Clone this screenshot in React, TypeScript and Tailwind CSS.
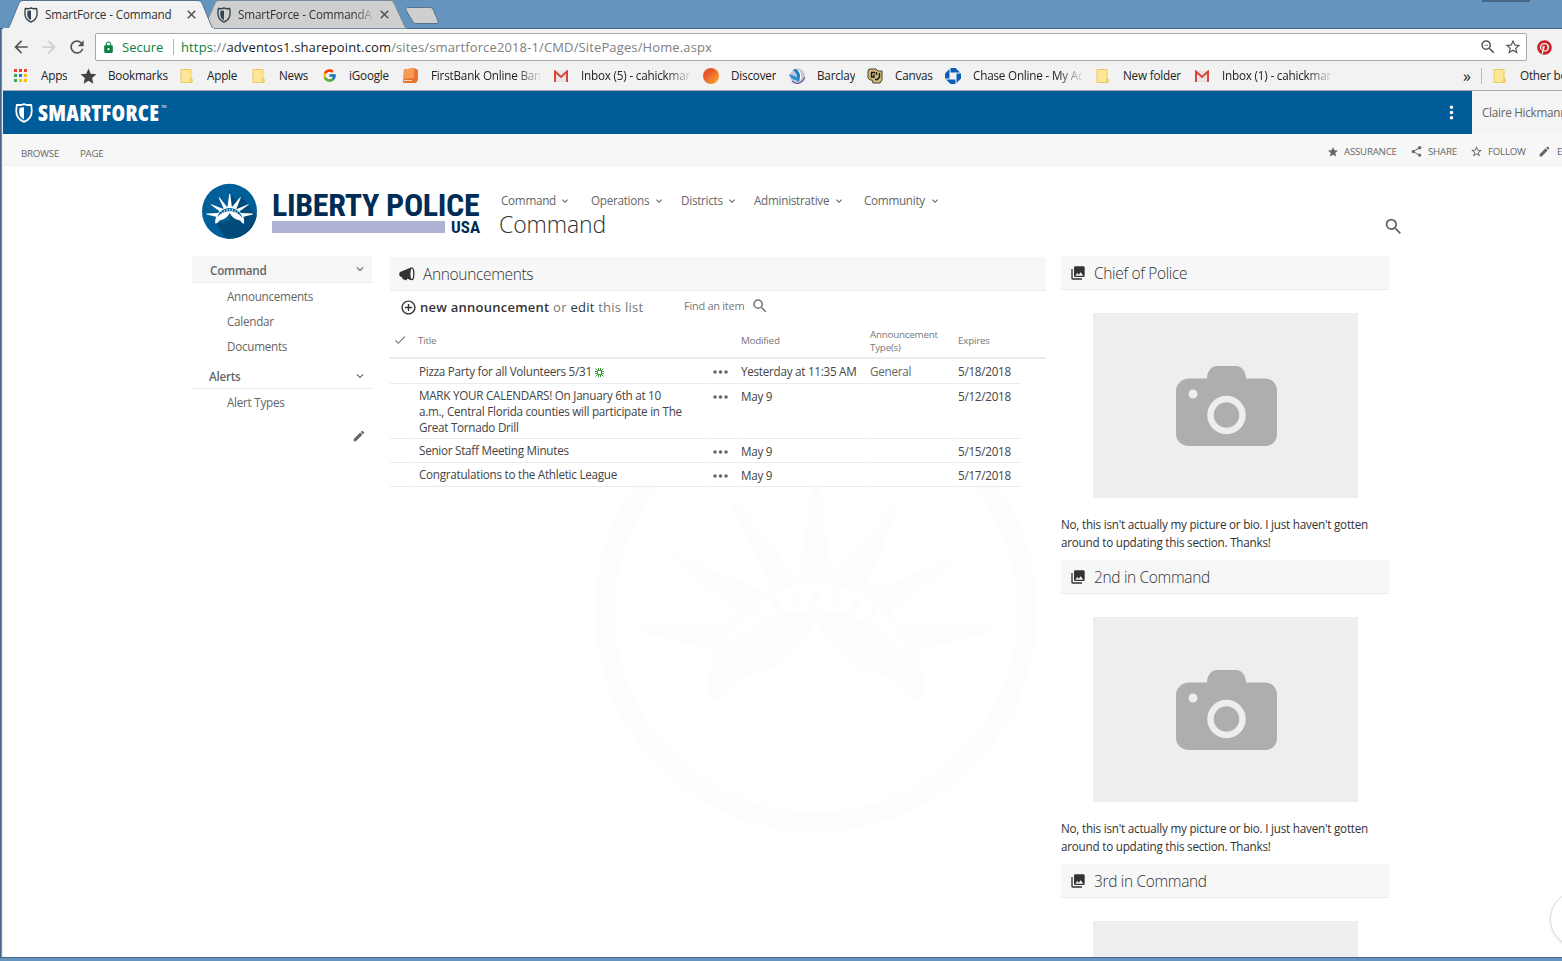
import type { ReactNode } from "react";
import {
  MdAddCircleOutline,
  MdArrowBack,
  MdArrowForward,
  MdCheck,
  MdEdit,
  MdKeyboardArrowDown,
  MdLock,
  MdMoreVert,
  MdPhotoLibrary,
  MdRefresh,
  MdSearch,
  MdShare,
  MdStar,
  MdStarBorder,
  MdZoomOut,
} from "react-icons/md";
import { FaPinterest } from "react-icons/fa";
import { FcGoogle } from "react-icons/fc";

function Shield({ className }: { className?: string }) {
  return (
    <svg viewBox="0 0 16 18" className={className} fill="none">
      <path d="M8 1 10.5 1.8 14.5 1.6 15 7C15 12 12 15.500 8 17 4 15.500 1 12 1 7L1.500 1.600 5.500 1.800Z" stroke="currentColor" strokeWidth="1.6" strokeLinejoin="round" />
      <path d="M8 3.800 4 4.200 3.600 8C3.800 11.500 5.500 13.600 8 14.800Z" fill="currentColor" />
    </svg>
  );
}

function Crown({ fill, band }: { fill: string; band: string }) {
  return (
    <g>
      <path
        fill={fill}
        d="M383 690C381 640 386 595 403 543L190 488Q172 478 190 468L450 458 478 420 282 272Q276 256 294 260L555 362 572 355 458 112Q460 96 476 106L645 316 658 318 695 35Q707 18 719 35L755 316 768 313 940 106Q956 98 956 114L855 362 870 365 1120 260Q1138 258 1131 272L930 420 955 458 1222 468Q1238 478 1222 488L1015 540C1030 600 1032 640 1028 695 985 690 960 650 940 625 830 605 750 540 707 455 664 540 590 605 475 625 455 665 430 695 383 690Z"
      />
      <path fill={band} d="M425 565C460 420 570 343 707 343 845 343 950 420 1000 582 920 475 830 420 707 420 590 420 480 475 425 565Z" />
      <g fill={fill}>
        <rect x="696" y="358" width="22" height="50" rx="9" />
        <rect x="635" y="364" width="22" height="48" rx="9" transform="rotate(-10 646 388)" />
        <rect x="753" y="364" width="22" height="48" rx="9" transform="rotate(10 764 388)" />
        <rect x="577" y="384" width="20" height="42" rx="9" transform="rotate(-22 587 405)" />
        <rect x="817" y="388" width="20" height="42" rx="9" transform="rotate(26 827 409)" />
        <rect x="527" y="416" width="18" height="36" rx="8" transform="rotate(-30 536 434)" />
        <rect x="867" y="416" width="18" height="36" rx="8" transform="rotate(34 876 434)" />
      </g>
    </g>
  );
}

function Watermark() {
  return (
    <svg className="pointer-events-none absolute left-[595px] top-[487px]" width="442" height="346" viewBox="45 51 1326 1038">
      <circle cx="708" cy="424" r="633" fill="none" stroke="#fdfdfd" strokeWidth="60" />
      <Crown fill="#fdfdfd" band="#ffffff" />
    </svg>
  );
}

function BrandBadge() {
  return (
    <svg width="56" height="56" viewBox="0 0 56 56">
      <defs>
        <clipPath id="badge">
          <circle cx="27.500" cy="28.300" r="27.500" />
        </clipPath>
      </defs>
      <g clipPath="url(#badge)">
        <rect width="56" height="56" fill="#005f99" />
        <path d="M28 11 36 19 39 14 45 20 52 30 70 44 50 70 28 62 14 40 28 38Z" fill="#004b79" />
        <g transform="translate(-3.900 9.600) scale(.0447)">
          <Crown fill="#ffffff" band="#005f99" />
        </g>
      </g>
    </svg>
  );
}

function Folder() {
  return (
    <svg width="13" height="16" viewBox="0 0 13 16">
      <path d="M1 1.500H11V10.500L12 11V14.500H1Z" fill="#ffe797" stroke="#ecc95c" />
      <path d="M10 14V11H12V14" fill="none" stroke="#ecc95c" />
    </svg>
  );
}

function Gmail() {
  return (
    <svg width="14" height="12" viewBox="0 0 14 12">
      <path d="M1 1H13V12H1Z" fill="#e6e4e4" />
      <path d="M1 12V1.500L7 7 13 1.500V12" fill="none" stroke="#d9473b" strokeWidth="2" />
    </svg>
  );
}

function AppsGrid() {
  const colors = ["#ea4335", "#ea4335", "#ea4335", "#34a853", "#1a73e8", "#fbbc05", "#34a853", "#fbbc05", "#fbbc05"];
  return (
    <svg width="13" height="13" viewBox="0 0 13 13">
      {colors.map((c, i) => (
        <rect key={i} x={(i % 3) * 5} y={Math.floor(i / 3) * 5} width="3" height="3" fill={c} />
      ))}
    </svg>
  );
}

function Cube() {
  return (
    <svg width="15" height="15" viewBox="0 0 15 15">
      <path d="M1 1.500 11 0 15 2V12L13 15H0Z" fill="#e8732c" />
      <path d="M1 1.500 11 0V10L0 11Z" fill="#f79a55" />
      <path d="M1 12.500H9" stroke="#ffd7b8" />
    </svg>
  );
}

function OrangeBall() {
  return (
    <svg width="16" height="16" viewBox="0 0 16 16">
      <defs>
        <linearGradient id="ball" x1="0" y1="0" x2="1" y2="1">
          <stop offset=".3" stopColor="#e8552b" />
          <stop offset="1" stopColor="#ffb02e" />
        </linearGradient>
      </defs>
      <circle cx="8" cy="8" r="8" fill="url(#ball)" />
    </svg>
  );
}

function Eagle() {
  return (
    <svg width="16" height="16" viewBox="0 0 16 16">
      <circle cx="8.500" cy="8" r="7.500" fill="#c3c6dc" />
      <path d="M6 1C11 2 13 6 11 12L8 14C9 9 8 5 4 2Z" fill="#1b7fc4" />
      <path d="M0 6 8 9 9 13C5 12 1 10 0 6Z" fill="#2b8fd0" />
      <path d="M9 2C12 5 12 9 11 12" fill="none" stroke="#fff" strokeWidth="1.200" />
      <path d="M3 13C7 17 13 16 16 9" fill="none" stroke="#6b6590" strokeWidth="1.300" />
    </svg>
  );
}

function CanvasMark() {
  return (
    <svg width="16" height="16" viewBox="0 0 16 16">
      <path d="M2 1H9L11 3H15V12L13 15H6L5 12H3L1 10V3Z" fill="#cfb87c" stroke="#4b4029" strokeWidth="1" />
      <path d="M8 4.500H4.500V9H7V6.500" fill="none" stroke="#1c1a17" strokeWidth="1.400" />
      <path d="M9.500 4V7M12.500 5V9L10.500 11.500H8" fill="none" stroke="#1c1a17" strokeWidth="1.400" />
    </svg>
  );
}

function Chase() {
  return (
    <svg width="16" height="16" viewBox="0 0 16 16" fill="#0b5fb8">
      <path d="M5.500 0H10.500L15 4.500H5.500Z" />
      <path d="M16 5.500V10.500L11.500 15V5.500Z" />
      <path d="M10.500 16H5.500L1 11.500H10.500Z" />
      <path d="M0 10.500V5.500L4.500 1V10.500Z" />
    </svg>
  );
}

function Megaphone() {
  return (
    <svg width="16" height="14" viewBox="0 0 16 14">
      <path d="M12 .5V13L8 11.700 7.500 13.500 3.500 12 3 10 1 9.500Q-.5 7 1 5Z" fill="#333" />
      <ellipse cx="12.800" cy="6.800" rx="2" ry="5.900" fill="#f7f7f7" stroke="#333" strokeWidth="1.300" />
    </svg>
  );
}

function Camera() {
  return (
    <svg width="102" height="80" viewBox="0 0 102 80">
      <path
        d="M13 12.500H31C31 6 35 0 41 0H60C66 0 70 6 70 12.500H89C96 12.500 101 18 101 25V68C101 75 96 80 89 80H13C6 80 0 75 0 68V25C0 18 6 12.500 13 12.500Z"
        fill="#aeaeae"
      />
      <circle cx="17" cy="28" r="4.500" fill="#eeeeee" />
      <circle cx="50.500" cy="49" r="16" fill="none" stroke="#eeeeee" strokeWidth="6.500" />
    </svg>
  );
}

function CloseX() {
  return (
    <svg width="9" height="9" viewBox="0 0 9 9">
      <path d="M.8.8 8.200 8.200M8.200.8.8 8.200" stroke="#555" strokeWidth="1.600" />
    </svg>
  );
}

function TitleBar() {
  return (
    <div className="relative h-[29px] overflow-hidden bg-[#6595be]">
      <svg className="absolute left-0 top-0" width="1562" height="29">
        <path d="M0 28.500H1562" stroke="#44658a" />
        <rect x="1482" y="0" width="48" height="2" fill="#476985" />
        <path d="M407.500 7.500H430Q432 7.500 433 9L438 21Q439 23.500 437 23.500H416Q414 23.500 413 22L406 10Q405 7.500 407.500 7.500Z" fill="#cfcfcf" stroke="#55738f" />
        <path d="M204 28.500 215 3Q216 .5 219 .5H390Q393 .5 394 3L405 27 407 28.500Z" fill="#cfcfcf" stroke="#7b8a98" />
        <path d="M3 29H7Q9 28 10 25L19 3Q20 .5 23 .5H198Q201 .5 202 3L211 25Q212 28.500 215 29Z" fill="#f2f2f2" stroke="#55738f" />
        <path d="M3 29H214" stroke="#f2f2f2" strokeWidth="2" />
      </svg>
      <div className="relative flex h-[29px] items-center pl-6 text-[11.7px] tracking-[-.14px] text-[#333]">
        <Shield className="h-4 w-[14px] text-[#36454f]" />
        <span className="ml-[7px] w-[142px] whitespace-nowrap">SmartForce - Command</span>
        <CloseX />
        <Shield className="ml-[21px] h-4 w-[14px] text-[#36454f]" />
        <span className="ml-[7px] w-[135px] overflow-hidden whitespace-nowrap [mask-image:linear-gradient(to_right,#000_116px,transparent_138px)]">
          SmartForce - CommandA
        </span>
        <span className="ml-[7px] flex">
          <CloseX />
        </span>
      </div>
    </div>
  );
}

function AddressBar() {
  return (
    <div className="flex h-[33px] items-center pl-[8px] pt-[3px] text-[#555]">
      <MdArrowBack size={20} />
      <MdArrowForward size={20} className="ml-[8px] text-[#ccc]" />
      <MdRefresh size={20} className="ml-[8px]" />
      <div className="ml-[8px] flex h-[28px] w-[1432px] shrink-0 items-center rounded-[2px] border border-[#a9a9a9] bg-white text-[13px]">
        <MdLock size={13} className="ml-[6px] text-[#0b8043]" />
        <span className="ml-[7px] w-[51px] whitespace-nowrap pt-px text-[#0b8043]">Secure</span>
        <span className="mr-[7px] h-4 w-px bg-[#b5b5b5]" />
        <span className="whitespace-nowrap pt-px text-[#808080] tracking-[.13px]">
          <span className="text-[#0b8043]">https</span>://<span className="text-[#222]">adventos1.sharepoint.com</span>
          /sites/smartforce2018-1/CMD/SitePages/Home.aspx
        </span>
        <span className="grow" />
        <MdZoomOut size={18} />
        <MdStarBorder size={18} className="ml-[7px] mr-[4px]" />
      </div>
      <FaPinterest size={15} className="ml-[10px] shrink-0 text-[#cb2027]" />
    </div>
  );
}

const fade = "[mask-image:linear-gradient(to_right,#000_85px,transparent_112px)]";
const fadeShifted = "-ml-px [mask-image:linear-gradient(to_right,#000_85px,transparent_112px)]";

const bookmarks: { icon: ReactNode; label: string; box: string; text?: string }[] = [
  { icon: <AppsGrid />, label: "Apps", box: "w-[67px]", text: "-ml-px" },
  { icon: <MdStar size={19} className="-ml-[2px] text-[#444]" />, label: "Bookmarks", box: "w-[99px]", text: "-ml-px" },
  { icon: <Folder />, label: "Apple", box: "w-[72px]", text: "-ml-px" },
  { icon: <Folder />, label: "News", box: "w-[71px]", text: "-ml-px" },
  { icon: <FcGoogle size={15} className="-ml-px" />, label: "iGoogle", box: "w-[80px]", text: "-ml-[2px]" },
  { icon: <Cube />, label: "FirstBank Online Bank", box: "w-[151px]", text: fade },
  { icon: <Gmail />, label: "Inbox (5) - cahickman", box: "w-[149px]", text: fadeShifted },
  { icon: <OrangeBall />, label: "Discover", box: "w-[86px]" },
  { icon: <Eagle />, label: "Barclay", box: "w-[78px]" },
  { icon: <CanvasMark />, label: "Canvas", box: "w-[78px]" },
  { icon: <Chase />, label: "Chase Online - My Ac", box: "w-[151px]", text: fade },
  { icon: <Folder />, label: "New folder", box: "w-[99px]", text: "-ml-px" },
  { icon: <Gmail />, label: "Inbox (1) - cahickman", box: "w-[149px]", text: fadeShifted },
];

function BookmarksBar() {
  return (
    <div className="flex h-[28px] items-center whitespace-nowrap pl-[11px] text-[11.7px] tracking-[-.2px] text-[#222]">
      {bookmarks.map((b) => (
        <div key={b.label} className={`flex shrink-0 items-center ${b.box}`}>
          <span className="flex w-[28px] shrink-0">{b.icon}</span>
          <span className={`max-w-[109px] overflow-hidden ${b.text ?? ""}`}>{b.label}</span>
        </div>
      ))}
      <span className="ml-[119px] w-[18px] shrink-0 text-[16px] leading-none">»</span>
      <span className="h-4 w-px shrink-0 bg-[#bbb]" />
      <span className="ml-[11px] flex w-[27px] shrink-0">
        <Folder />
      </span>
      <span>Other bookmarks</span>
    </div>
  );
}

function SuiteBar() {
  return (
    <div className="flex h-[43px] bg-[#f4f4f4]">
      <div className="flex w-[1469px] shrink-0 items-center bg-[#005c99] pl-[12px] text-white">
        <Shield className="h-[20px] w-[18px]" />
        <span className="mb-px ml-[5px] text-[22px] font-extrabold leading-none tracking-[.25px] [font-stretch:75%]">SMARTFORCE</span>
        <span className="mb-[12px] ml-[2px] text-[4px]">TM</span>
        <span className="grow" />
        <MdMoreVert size={21} className="mr-[10px]" />
      </div>
      <span className="ml-[10px] self-center whitespace-nowrap text-[#666]">Claire Hickmann</span>
    </div>
  );
}

function RibbonBar() {
  return (
    <div className="flex h-[32px] items-center whitespace-nowrap border-b border-[#efefef] bg-[#f7f7f7] pl-[18px] text-[9.7px] tracking-[-.22px] text-[#666]">
      <span className="mt-[9px] w-[59px] shrink-0">BROWSE</span>
      <span className="mt-[9px] shrink-0">PAGE</span>
      <span className="ml-auto flex w-[235px] shrink-0 items-center pt-[5px]">
        <span className="flex w-[17px] shrink-0"><MdStar size={12} /></span>
        <span className="w-[66px] shrink-0">ASSURANCE</span>
        <span className="flex w-[18px] shrink-0"><MdShare size={13} /></span>
        <span className="w-[42px] shrink-0">SHARE</span>
        <span className="flex w-[18px] shrink-0"><MdStarBorder size={13} /></span>
        <span className="w-[50px] shrink-0">FOLLOW</span>
        <span className="flex w-[19px] shrink-0"><MdEdit size={13} /></span>
        <span>EDIT</span>
      </span>
    </div>
  );
}

const menus = [
  { label: "Command", box: "w-[90px]", text: "w-[58px]" },
  { label: "Operations", box: "w-[90px]", text: "w-[62px]" },
  { label: "Districts", box: "w-[73px]", text: "w-[45px]" },
  { label: "Administrative", box: "w-[110px]", text: "w-[79px]" },
  { label: "Community", box: "w-[90px]", text: "w-[65px]" },
];

function SiteHeader() {
  return (
    <div className="flex h-[90px] items-start pl-[199px]">
      <div className="mt-[17px] flex">
        <BrandBadge />
      </div>
      <div className="ml-[14px] mt-[22px] w-[209px] font-['Roboto'] font-bold tracking-normal text-[#002c55]">
        <div className="h-[33px] whitespace-nowrap text-[32px] leading-[34px] tracking-[-.35px] [font-stretch:75%]">LIBERTY POLICE</div>
        <div className="flex items-start">
          <div className="h-[12px] w-[173px] bg-[#aeb3d3]" />
          <span className="ml-[6px] text-[17px] leading-[13px] [font-stretch:75%]">USA</span>
        </div>
      </div>
      <div className="ml-[18px] mt-[26px]">
        <div className="flex h-[18px] items-center pl-[2px] text-[#666]">
          {menus.map((m) => (
            <div key={m.label} className={`flex items-center ${m.box}`}>
              <span className={m.text}>{m.label}</span>
              <MdKeyboardArrowDown size={12} />
            </div>
          ))}
        </div>
        <h1 className="-mt-px text-[23px] font-light leading-[30px] tracking-[-.1px] text-[#333]">Command</h1>
      </div>
      <MdSearch size={21} className="ml-auto mr-[158px] mt-[50px] text-[#666]" />
    </div>
  );
}

function Sidebar() {
  return (
    <nav className="w-[180px] shrink-0 text-[#666]">
      <div className="flex h-[27px] items-center justify-between border-b border-[#ebebeb] bg-[#f6f6f6] pl-[18px] pr-[5px]">
        <span className="pt-[4px] font-semibold">Command</span>
        <MdKeyboardArrowDown size={14} />
      </div>
      <div className="pl-[35px] pt-px leading-[25px]">
        <div>Announcements</div>
        <div>Calendar</div>
        <div>Documents</div>
      </div>
      <div className="mt-[4px] flex h-[26px] items-center justify-between border-b border-[#ebebeb] pl-[17px] pr-[5px]">
        <span className="pt-[3px] font-semibold">Alerts</span>
        <MdKeyboardArrowDown size={14} />
      </div>
      <div className="pl-[35px] pt-px leading-[25px]">Alert Types</div>
      <MdEdit size={14} className="ml-[160px] mt-[14px]" />
    </nav>
  );
}

function PartTitle({ icon, children }: { icon: ReactNode; children: ReactNode }) {
  return (
    <div className="flex h-[34px] items-center rounded-[1px] border-b border-[#ebebeb] bg-[#f7f7f7] pl-[9px] text-[15.5px] font-light tracking-[-.34px] text-[#333]">
      <span className="flex w-[24px]">{icon}</span>
      <h2 className="pt-[2px]">{children}</h2>
    </div>
  );
}

const rows = [
  { title: "Pizza Party for all Volunteers 5/31", isNew: true, modified: "Yesterday at 11:35 AM", type: "General", expires: "5/18/2018", h: "h-[25px]", pad: "pt-[4px]" },
  {
    title: "MARK YOUR CALENDARS! On January 6th at 10 a.m., Central Florida counties will participate in The Great Tornado Drill",
    isNew: false, modified: "May 9", type: "", expires: "5/12/2018", h: "h-[55px]", pad: "pt-[3px]",
  },
  { title: "Senior Staff Meeting Minutes", isNew: false, modified: "May 9", type: "", expires: "5/15/2018", h: "h-[24px]", pad: "pt-[3px]" },
  { title: "Congratulations to the Athletic League", isNew: false, modified: "May 9", type: "", expires: "5/17/2018", h: "h-[24px]", pad: "pt-[3px]" },
];

function Dots() {
  return (
    <svg width="15" height="4" viewBox="0 0 15 4" fill="#666">
      <circle cx="2" cy="2" r="1.800" />
      <circle cx="7.500" cy="2" r="1.800" />
      <circle cx="13" cy="2" r="1.800" />
    </svg>
  );
}

function NewBurst() {
  return (
    <svg className="ml-[3px] inline-block align-[-1px]" width="9" height="9" viewBox="0 0 9 9" stroke="#3c9a3c" strokeWidth="1" fill="none">
      <rect x="2.500" y="2.500" width="4" height="4" />
      <path d="M.5.5 3 3M8.500.5 6 3M.5 8.500 3 6M8.500 8.500 6 6M3.500 0V3M5.500 0V3M3.500 6V9M5.500 6V9M0 3.500H3M0 5.500H3M6 3.500H9M6 5.500H9" />
    </svg>
  );
}

const columns = "grid grid-cols-[23px_291px_30px_128px_87px_67px] gap-x-px";

function Announcements() {
  const cell = "border-b border-[#ebebeb]";
  return (
    <section className="ml-[18px] w-[656px] shrink-0 pt-px">
      <PartTitle icon={<Megaphone />}>Announcements</PartTitle>
      <div className="flex h-[32px] items-center whitespace-nowrap pl-[10px] text-[13px] text-[#777]">
        <MdAddCircleOutline size={17} className="text-[#333]" />
        <span className="ml-[3px] w-[264px] pt-px tracking-[.25px]">
          <b className="font-semibold text-[#333]">new announcement</b> or <span className="text-[#333]">edit</span> this list
        </span>
        <span className="w-[67px] pb-px text-[11px]">Find an item</span>
        <MdSearch size={18} className="-mt-[2px]" />
      </div>
      <div className={`${columns} h-[36px] items-center border-b-2 border-[#ebebeb] text-[9.8px] leading-[13px] tracking-[-.22px] text-[#777]`}>
        <MdCheck size={14} className="ml-[3px]" />
        <span className="pl-[4px]">Title</span>
        <span />
        <span className="pl-[4px]">Modified</span>
        <span className="pl-[4px] pt-[2px]">
          Announcement
          <br />
          Type(s)
        </span>
        <span className="pl-[4px]">Expires</span>
      </div>
      {rows.map((r) => (
        <div key={r.title} className={`${columns} ${r.h} leading-[16px] text-[#444]`}>
          <span className={cell} />
          <span className={`${cell} ${r.pad} pl-[5px] pr-[20px]`}>
            {r.title}
            {r.isNew && <NewBurst />}
          </span>
          <span className={`${cell} flex pl-[7px] pt-[11px]`}><Dots /></span>
          <span className={`${cell} whitespace-nowrap pl-[4px] pt-[4px]`}>{r.modified}</span>
          <span className={`${cell} pl-[4px] pt-[4px] text-[#666]`}>{r.type}</span>
          <span className={`${cell} pl-[4px] pt-[4px]`}>{r.expires}</span>
        </div>
      ))}
    </section>
  );
}

function People() {
  return (
    <aside className="ml-[15px] w-[328px] shrink-0">
      {["Chief of Police", "2nd in Command", "3rd in Command"].map((name) => (
        <section key={name} className="h-[304px]">
          <PartTitle icon={<MdPhotoLibrary size={16} className="text-[#333]" />}>{name}</PartTitle>
          <div className="ml-[32px] mt-[23px] flex h-[185px] w-[265px] items-center justify-center bg-[#eeeeee] pl-[2px]">
            <Camera />
          </div>
          <p className="mt-[17px] whitespace-nowrap leading-[18px] tracking-[-.23px] text-[#333]">
            No, this isn't actually my picture or bio. I just haven't gotten
            <br />
            around to updating this section. Thanks!
          </p>
        </section>
      ))}
    </aside>
  );
}

export default function App() {
  return (
    <div className="relative isolate h-[961px] w-[1562px] overflow-hidden bg-[#6595be] font-['Open_Sans',sans-serif]">
      <TitleBar />
      <div className="h-[929px] border-b border-l border-[#44658a] pl-px">
        <div className="h-[928px] overflow-hidden border-l border-[#e8e8e8] bg-white">
          <div className="h-[62px] border-b border-[#a9a9a9] bg-[#f2f2f2]">
            <AddressBar />
            <BookmarksBar />
          </div>
          <div className="text-[11.7px] tracking-[-.27px]">
            <SuiteBar />
            <RibbonBar />
            <SiteHeader />
            <div className="flex pl-[189px]">
              <Sidebar />
              <Announcements />
              <People />
            </div>
          </div>
        </div>
      </div>
      <Watermark />
      <div className="absolute left-[1550px] top-[891px] h-14 w-14 rounded-full border border-[#ddd] bg-white shadow" />
    </div>
  );
}
